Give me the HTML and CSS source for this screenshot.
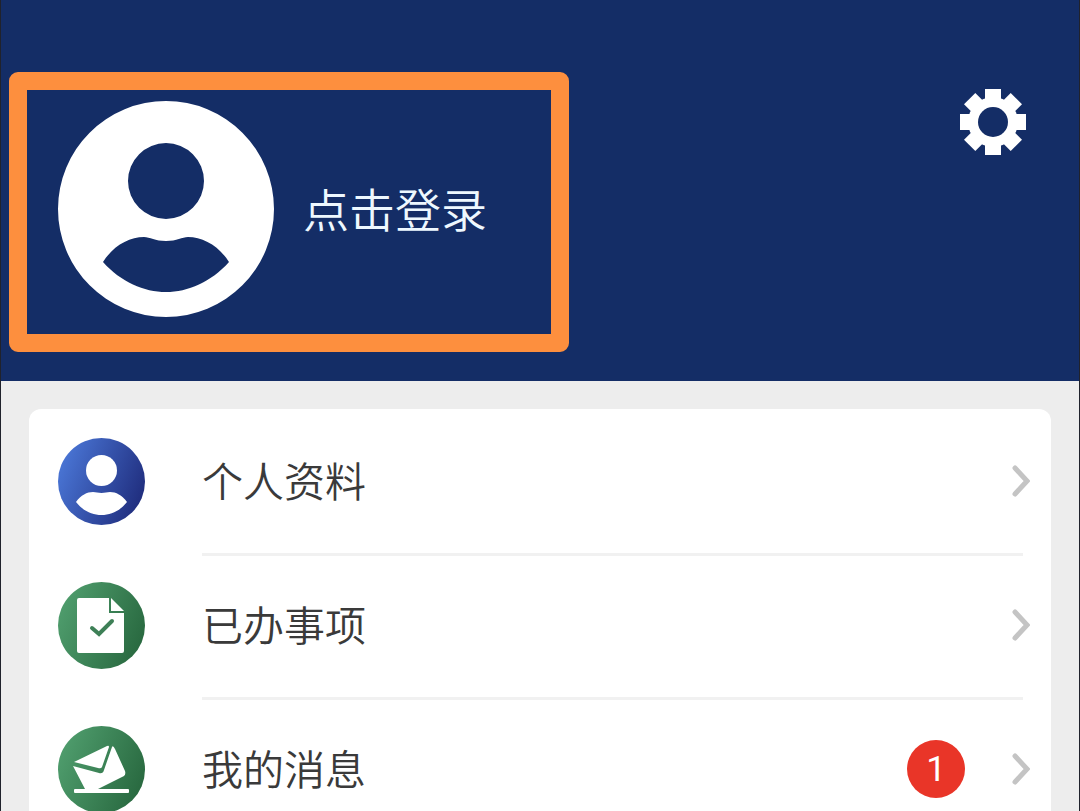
FILE: index.html
```
<!DOCTYPE html>
<html lang="zh-CN">
<head>
    <meta charset="UTF-8">
    <meta name="viewport" content="width=device-width, initial-scale=1.0">
    <title>我的</title>
    <link rel="stylesheet" href="styles.css">
</head>
<body>
    <div class="page">
      <header class="header">
        <button type="button" class="login">
          <svg class="avatar" viewBox="0 0 216 216" aria-hidden="true">
            <path fill="#fff" fill-rule="evenodd" d="M108 0a108 108 0 1 0 0 216a108 108 0 1 0 0-216zM108 42a38 38 0 1 1 0 76a38 38 0 1 1 0-76zM45 161C55 145 71 136 86 136C92 136 97 140 108 140C119 140 124 136 130 136C145 136 161 145 171 161C153 181 130 191 108 191C86 191 63 181 45 161z"/>
          </svg>
          <span class="login-text">点击登录</span>
        </button>
        <button type="button" class="settings" aria-label="设置">
          <svg viewBox="0 0 68 68" aria-hidden="true">
            <g fill="#fff">
              <rect x="26" y="1" width="16" height="66"/>
              <rect x="26" y="1" width="16" height="66" transform="rotate(45 34 34)"/>
              <rect x="26" y="1" width="16" height="66" transform="rotate(90 34 34)"/>
              <rect x="26" y="1" width="16" height="66" transform="rotate(135 34 34)"/>
              <circle cx="34" cy="34" r="25"/>
            </g>
            <circle cx="34" cy="34" r="15" fill="#142d66"/>
          </svg>
        </button>
      </header>

      <nav class="menu">
        <a class="item" href="#profile">
          <svg class="icon" viewBox="0 0 87 87" aria-hidden="true">
            <defs>
              <linearGradient id="blue" x1="0" y1="0.3" x2="1" y2="0.7">
                <stop offset="0" stop-color="#4a76d6"/>
                <stop offset="1" stop-color="#1f2c7c"/>
              </linearGradient>
            </defs>
            <circle cx="43.5" cy="43.5" r="43.5" fill="url(#blue)"/>
            <circle cx="43.5" cy="32.5" r="15.5" fill="#fff"/>
            <path fill="#fff" d="M18 64C23 57 29 54 35 54C38 54 40 55 43.500 55C47 55 49 54 52 54C58 54 64 57 69 64C62 73 53 77 43.500 77C34 77 25 73 18 64z"/>
          </svg>
          <span class="row">
            <span class="label">个人资料</span>
            <svg class="arrow" viewBox="0 0 18 34" aria-hidden="true"><path d="M3 4l12 13l-12 13"/></svg>
          </span>
        </a>
        <a class="item" href="#done">
          <svg class="icon" viewBox="0 0 87 87" aria-hidden="true">
            <defs>
              <linearGradient id="green" x1="0" y1="0.3" x2="1" y2="0.7">
                <stop offset="0" stop-color="#4f9d6d"/>
                <stop offset="1" stop-color="#28683f"/>
              </linearGradient>
            </defs>
            <circle cx="43.5" cy="43.5" r="43.5" fill="url(#green)"/>
            <path fill="#fff" d="M21 16H51V31H66V69a2 2 0 0 1-2 2H21a2 2 0 0 1-2-2V18a2 2 0 0 1 2-2z"/>
            <path fill="#fff" d="M53 16L66 29H53z"/>
            <path fill="none" stroke="#3e8057" stroke-width="4" stroke-linecap="round" d="M34 46L41 52L54 39"/>
          </svg>
          <span class="row">
            <span class="label">已办事项</span>
            <svg class="arrow" viewBox="0 0 18 34" aria-hidden="true"><path d="M3 4l12 13l-12 13"/></svg>
          </span>
        </a>
        <a class="item" href="#messages">
          <svg class="icon" viewBox="0 0 87 87" aria-hidden="true">
            <circle cx="43.5" cy="43.5" r="43.5" fill="url(#green)"/>
            <path fill="#fff" d="M16 36L49 20Q51 19 51 21L44 41Q43 43 40 42z"/>
            <path fill="#fff" d="M15 40L41 47Q45 48 46 44L54 21Q55 19 57 23L67 45Q68 48 66 50L40 63H27Z"/>
            <rect x="16" y="63" width="55" height="4" rx="1" fill="#fff"/>
          </svg>
          <span class="row">
            <span class="label">我的消息</span>
            <span class="badge">1</span>
            <svg class="arrow" viewBox="0 0 18 34" aria-hidden="true"><path d="M3 4l12 13l-12 13"/></svg>
          </span>
        </a>
      </nav>
    </div>
</body>
</html>
```
FILE: styles.css
```
* {
  box-sizing: border-box;
}
body {
  margin: 0;
  font-family: "Noto Sans CJK SC", sans-serif;
}
.page {
  height: 100vh;
  overflow: hidden;
  background-color: #ededed;
  border: solid #20222c;
  border-width: 0 1px;
}
.header {
  display: flex;
  justify-content: space-between;
  align-items: flex-start;
  padding: 72px 52px 29px 8px;
  background-color: #142d66;
}
button {
  margin: 0;
  padding: 0;
  border: 0;
  background: none;
  font-family: inherit;
  cursor: pointer;
}
/* login area */
.login {
  display: flex;
  align-items: center;
  gap: 29px;
  width: 55%;
  padding: 11px 31px 17px;
  border: 18px solid #fd8f3e;
  border-radius: 9px;
  color: #eef8ff;
}
.login-text {
  padding-bottom: 4px;
  font-size: 46px;
  font-weight: 350;
  line-height: 60px;
}
.avatar {
  width: 216px;
  height: 216px;
}
.settings {
  display: flex;
  margin-top: 16px;
}
.settings svg {
  width: 68px;
  height: 68px;
}
/* menu list */
.menu {
  margin: 28px;
  padding-top: 3px;
  background-color: #fff;
  border-radius: 12px;
}
.item {
  display: flex;
  align-items: center;
  gap: 57px;
  padding: 0 28px 0 29px;
  color: #3a3a3a;
  text-decoration: none;
}
.icon {
  width: 87px;
  height: 87px;
  margin-bottom: 5px;
}
.row {
  flex: 1;
  display: flex;
  align-items: center;
  height: 144px;
  padding-bottom: 3px;
  border-bottom: 3px solid #f1f1f1;
}
.label {
  flex: 1;
  padding-bottom: 4px;
  font-size: 41px;
  font-weight: 350;
  line-height: 56px;
}
.badge {
  width: 58px;
  height: 58px;
  margin-right: 47px;
  border-radius: 50%;
  background-color: #e93528;
  color: #fff;
  font-family: Roboto, sans-serif;
  font-size: 35px;
  font-weight: 400;
  line-height: 60px;
  text-align: center;
}
.arrow {
  width: 18px;
  height: 34px;
  margin-right: -7px;
  fill: none;
  stroke: #c4c4c4;
  stroke-width: 5;
  stroke-linecap: round;
}
```
